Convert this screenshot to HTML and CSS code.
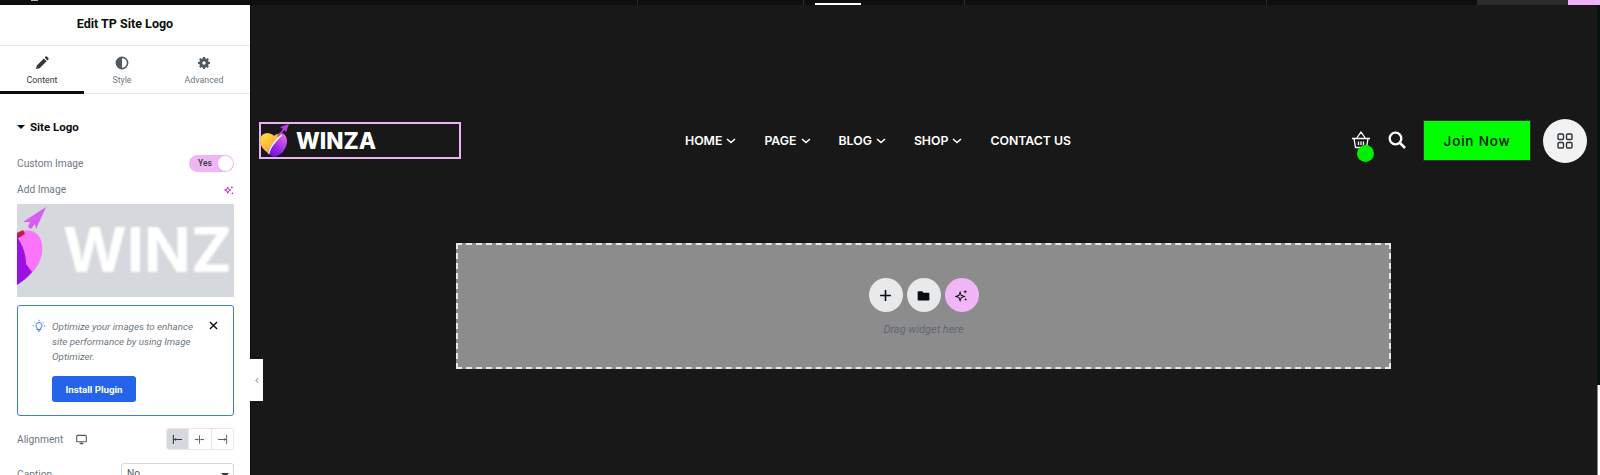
FILE: index.html
```html
<!DOCTYPE html>
<html lang="en">
<head>
  <meta charset="UTF-8" />
  <meta name="viewport" content="width=device-width, initial-scale=1.0"/>
  <title>Edit TP Site Logo</title>
  <link rel="stylesheet" href="styles.css">
</head>
<body>
  <!-- Top strip -->
  <div class="topbar">
    <div class="top-cell cell-a"><span class="top-dot"></span></div>
    <div class="top-cell cell-b"></div>
    <div class="top-cell cell-c"><span class="top-active"></span></div>
    <div class="top-cell cell-d"></div>
    <div class="top-cell cell-e"></div>
    <div class="top-cell cell-f"></div>
    <div class="top-cell cell-g"></div>
  </div>

  <div class="editor">
    <!-- Left panel -->
    <aside class="panel">
      <div class="panel-title">Edit TP Site Logo</div>
      <div class="tabs">
        <div class="tab tab-content active">
          <svg class="tab-icon" viewBox="0 0 14 14"><path d="M1 13l.8-3.6 7-7 2.8 2.8-7 7zM9.600 1.600l1-1a1 1 0 0 1 1.300 0l1.500 1.500a1 1 0 0 1 0 1.300l-1 1z" fill="#333a41"/></svg>
          <span>Content</span>
        </div>
        <div class="tab tab-style">
          <svg class="tab-icon" viewBox="0 0 14 14"><circle cx="7" cy="7" r="5.600" fill="none" stroke="#515962" stroke-width="1.600"/><path d="M7 1.400a5.600 5.600 0 0 0 0 11.200z" fill="#515962"/></svg>
          <span>Style</span>
        </div>
        <div class="tab tab-advanced">
          <svg class="tab-icon" viewBox="0 0 14 14"><circle cx="7" cy="7" r="3.600" fill="none" stroke="#515962" stroke-width="2.400"/><path d="M7 1v12M1 7h12M2.800 2.800l8.400 8.400M11.200 2.800l-8.400 8.400" stroke="#515962" stroke-width="2.200"/><circle cx="7" cy="7" r="1.700" fill="#fff"/></svg>
          <span>Advanced</span>
        </div>
      </div>

      <div class="panel-body">
        <div class="section-head"><span class="caret"></span>Site Logo</div>

        <div class="row row-custom">
          <label>Custom Image</label>
          <div class="toggle"><span>Yes</span><i></i></div>
        </div>

        <div class="row row-add">
          <label>Add Image</label>
          <svg class="spark" viewBox="0 0 12 12"><path d="M4.500 2.500l1 2.700 2.700 1-2.700 1-1 2.700-1-2.700-2.700-1 2.700-1z" fill="none" stroke="#d004d4" stroke-width="1.100"/><path d="M9.500 1l.5 1.300 1.300.5-1.300.5-.5 1.300-.5-1.300-1.300-.5 1.300-.5zM10 8.500l.5 1 1 .5-1 .5-.5 1-.5-1-1-.5 1-.5z" fill="#d004d4"/></svg>
        </div>

        <div class="preview">
          <svg class="preview-mark" viewBox="0 0 30 90">
            <path d="M29 3L6 18l7 0-2 5 3 2 4-5 1 5z" fill="#d75cf2"/>
            <path d="M0 29c6-3 12-3 17-1 7 3 9 12 8 21-2 13-11 23-25 32z" fill="#fb74fb"/>
            <path d="M0 33c6 8 9 18 9 27l6 8c-4 5-9 9-15 13z" fill="#9a12e2"/>
            <path d="M0 29l6-3 2 4-8 5z" fill="#c8194c"/>
          </svg>
          <span class="preview-text">WINZ</span>
        </div>

        <div class="notice">
          <svg class="bulb" viewBox="0 0 14 14"><path d="M7 3.500a3 3 0 0 0-1.800 5.400v1.600h3.600V8.900A3 3 0 0 0 7 3.500zM5.800 12h2.400M7 .8v1.100M2.200 2.800l.8.800M11.800 2.800l-.8.800M.8 7h1.100M12.100 7h1.100" fill="none" stroke="#2563eb" stroke-width=".9"/></svg>
          <div class="notice-body">
            <p>Optimize your images to enhance site performance by using Image Optimizer.</p>
            <button class="install">Install Plugin</button>
          </div>
          <svg class="close" viewBox="0 0 10 10"><path d="M1 1l8 8M9 1l-8 8" stroke="#0c0d0e" stroke-width="1.500"/></svg>
        </div>

        <div class="row row-align">
          <label>Alignment</label>
          <svg class="monitor" viewBox="0 0 12 12"><path d="M1.500 1.500h9a.7.7 0 0 1 .7.7v5.600a.7.7 0 0 1-.7.7h-9a.7.7 0 0 1-.7-.7V2.200a.7.7 0 0 1 .7-.7zM4 10.500h4M6 8.500v2" fill="none" stroke="#515962" stroke-width="1.200"/></svg>
          <div class="seg">
            <div class="seg-btn on"><svg viewBox="0 0 12 12"><path d="M1.500 1v10M1.500 6H11" stroke="#333a41" stroke-width="1.200"/><path d="M2 6l2.500-1.600v3.200z" fill="#333a41"/></svg></div>
            <div class="seg-btn"><svg viewBox="0 0 12 12"><path d="M6 1.500v9M1 6h3M8 6h3" stroke="#515962" stroke-width="1"/><path d="M5.500 6L3.500 4.800v2.400zM6.500 6l2-1.200v2.400z" fill="#515962"/></svg></div>
            <div class="seg-btn"><svg viewBox="0 0 12 12"><path d="M10.500 1v10M1 6h9.500" stroke="#515962" stroke-width="1"/><path d="M10 6L7.500 4.400v3.200z" fill="#515962"/></svg></div>
          </div>
        </div>

        <div class="row row-caption">
          <label>Caption</label>
          <div class="select">No<span class="select-caret"></span></div>
        </div>
      </div>

      <div class="collapse">
        <svg viewBox="0 0 6 10"><path d="M4.500 1.500L1.500 5l3 3.500" fill="none" stroke="#515962" stroke-width="1.300"/></svg>
      </div>
    </aside>

    <!-- Page canvas -->
    <main class="canvas">
      <header class="site-header">
        <div class="logo-box">
          <svg class="logo-mark" viewBox="0 0 30 34">
            <defs>
              <linearGradient id="heartL" x1="0" y1="0" x2="1" y2="1"><stop offset="0" stop-color="#ffe63b"/><stop offset=".6" stop-color="#ffb03a"/><stop offset="1" stop-color="#ef3f5c"/></linearGradient>
              <linearGradient id="heartR" x1="1" y1="0" x2="0" y2="1"><stop offset="0" stop-color="#f870ee"/><stop offset=".55" stop-color="#8f22e6"/><stop offset="1" stop-color="#4a0fb5"/></linearGradient>
            </defs>
            <path d="M14 12C10 8 1 8 0 16c0 7 7 14 14 17 8-2 13-9 13-16 0-6-5-10-9-7z" fill="url(#heartR)"/>
            <path d="M14 12C10 8 1 8 0 16c0 6 4 10 8 13 2-7 7-13 13-18-2-2-5-1-7 1z" fill="url(#heartL)"/>
            <path d="M21.500 10.500C15 15.500 10 22 8 29.500l1.200.8C11 23 16 17 22.500 11.500z" fill="#fff"/>
            <path d="M29 0l-9 3 3 2-6 7 1 1 6.500-7 1.500 2.500z" fill="#b63be0"/>
          </svg>
          <span class="logo-text">WINZA</span>
        </div>

        <nav class="site-nav">
          <a>HOME<svg class="chev" viewBox="0 0 10 6"><path d="M1 1l4 3.500L9 1" fill="none" stroke="#fff" stroke-width="1.600"/></svg></a>
          <a>PAGE<svg class="chev" viewBox="0 0 10 6"><path d="M1 1l4 3.500L9 1" fill="none" stroke="#fff" stroke-width="1.600"/></svg></a>
          <a>BLOG<svg class="chev" viewBox="0 0 10 6"><path d="M1 1l4 3.500L9 1" fill="none" stroke="#fff" stroke-width="1.600"/></svg></a>
          <a>SHOP<svg class="chev" viewBox="0 0 10 6"><path d="M1 1l4 3.500L9 1" fill="none" stroke="#fff" stroke-width="1.600"/></svg></a>
          <a>CONTACT US</a>
        </nav>

        <div class="actions">
          <div class="cart">
            <svg viewBox="0 0 20 18"><path d="M1 7.500h18M3 7.500l1.500 9h11l1.500-9M5.500 7.500L10 1l4.500 6.500M7.500 10.500v3.500M10 10.500v3.500M12.500 10.500v3.500" fill="none" stroke="#fff" stroke-width="1.300"/></svg>
            <span class="cart-dot"></span>
          </div>
          <svg class="search" viewBox="0 0 18 18"><circle cx="7.500" cy="7.500" r="5.800" fill="none" stroke="#fff" stroke-width="2.300"/><path d="M12 12l5 5" stroke="#fff" stroke-width="2.500"/></svg>
          <a class="join">Join Now</a>
          <div class="grid-btn">
            <svg viewBox="0 0 16 16"><g fill="none" stroke="#29343d" stroke-width="1.400"><rect x="1" y="1" width="5.500" height="5.500" rx="1.200"/><rect x="9.500" y="1" width="5.500" height="5.500" rx="1.200"/><rect x="1" y="9.500" width="5.500" height="5.500" rx="1.200"/><rect x="9.500" y="9.500" width="5.500" height="5.500" rx="1.200"/></g></svg>
          </div>
        </div>
      </header>

      <section class="dropzone">
        <div class="drop-buttons">
          <div class="drop-btn">
            <svg viewBox="0 0 12 12"><path d="M6 1v10M1 6h10" stroke="#0c0d0e" stroke-width="1.500"/></svg>
          </div>
          <div class="drop-btn">
            <svg viewBox="0 0 14 12"><path d="M1 1.500h4.500L7 3h5.500a.8.800 0 0 1 .8.800v6.700a.8.800 0 0 1-.8.800h-11a.8.800 0 0 1-.8-.8V2.300a.8.800 0 0 1 .8-.8z" fill="#0c0d0e"/></svg>
          </div>
          <div class="drop-btn ai">
            <svg viewBox="0 0 14 14"><path d="M5.500 3.500l1.200 3.300 3.300 1.200-3.300 1.200-1.200 3.300-1.200-3.300L1 8l3.300-1.200z" fill="none" stroke="#0c0d0e" stroke-width="1.100"/><path d="M11 .8l.6 1.600 1.600.6-1.600.6-.6 1.600-.6-1.600L8.800 3l1.600-.6zM11.500 9.500l.5 1.200 1.200.5-1.200.5-.5 1.200-.5-1.200-1.200-.5 1.200-.5z" fill="#0c0d0e"/></svg>
          </div>
        </div>
        <div class="drop-text">Drag widget here</div>
      </section>
    </main>
  </div>
  <div class="edge-dark"></div>
  <div class="edge-light"></div>
</body>
</html>
```

FILE: styles.css
```css
html, body { margin: 0; padding: 0; height: 475px; overflow: hidden; }
body { font-family: "Roboto", sans-serif; background: #181818; position: relative; }

/* Top strip */
.topbar { display: flex; height: 5px; background: #0c0e11; overflow: hidden; }
.top-cell { position: relative; height: 5px; box-sizing: border-box; border-right: 1px solid #2a2c2f; }
.cell-a { width: 638px; }
.cell-b { width: 166px; }
.cell-c { width: 161px; }
.cell-d { width: 302px; }
.cell-e { width: 210px; border-right: 0; }
.cell-f { width: 91px; background: #2b2b2b; border-right: 0; }
.cell-g { width: 32px; background: #efb1f7; border-right: 0; }
.top-dot { position: absolute; left: 31px; top: 0; width: 7px; height: 1px; background: #b9b9b9; }
.top-active { position: absolute; left: 11px; top: 3px; width: 46px; height: 2px; background: #fff; }

.editor { display: flex; height: 470px; }

/* Panel */
.panel { position: relative; width: 250px; flex: none; background: #fff; color: #515962; border-right: 1px solid #0c0e11; box-sizing: content-box; }
.panel-title { height: 40px; line-height: 38px; text-align: center; font-size: 12.500px; font-weight: 700; color: #0c0d0e; border-bottom: 1px solid #e6e8ea; }
.tabs { display: flex; height: 47px; border-bottom: 1px solid #e6e8ea; }
.tab { box-sizing: border-box; padding-top: 10px; text-align: center; font-size: 8.800px; color: #6d7882; display: flex; flex-direction: column; align-items: center; gap: 5px; position: relative; }
.tab-content { width: 84px; }
.tab-style { width: 76px; }
.tab-advanced { width: 88px; }
.tab.active { color: #333a41; }
.tab.active::after { content: ""; position: absolute; left: 0; right: 0; bottom: -1px; height: 3px; background: #0c0d0e; }
.tab-icon { width: 14px; height: 14px; }

.panel-body { padding: 0 16px 0 17px; overflow: hidden; height: 381px; }
.section-head { margin-top: 25px; height: 16px; line-height: 16px; font-size: 11.500px; font-weight: 700; color: #0c0d0e; display: flex; align-items: center; }
.caret { width: 0; height: 0; border: 4px solid transparent; border-top: 4px solid #0c0d0e; border-bottom: 0; margin-right: 5px; }

.row { display: flex; align-items: center; justify-content: space-between; font-size: 10.200px; color: #6d7882; }
.row label { white-space: nowrap; }
.row-custom { margin-top: 19px; height: 18px; }
.toggle { width: 45px; height: 17px; border-radius: 9px; background: #efb5f5; position: relative; font-size: 8.500px; color: #333a41; line-height: 17px; padding-left: 9px; box-sizing: border-box; font-weight: 500; }
.toggle i { position: absolute; right: 1px; top: 1px; width: 15px; height: 15px; border-radius: 50%; background: #fff; }
.row-add { margin-top: 9px; height: 17px; }
.spark { width: 10px; height: 10px; }

.preview { margin-top: 6px; height: 93px; background: #d5d8dc; display: flex; align-items: flex-start; overflow: hidden; }
.preview-mark { width: 30px; height: 90px; flex: none; filter: blur(.4px); }
.preview-text { margin-left: 16px; margin-top: 15px; font-family: "Inter", sans-serif; font-weight: 700; font-size: 61.500px; color: #fff; filter: blur(1px); line-height: 1; white-space: nowrap; }

.notice { margin-top: 8px; height: 111px; box-sizing: border-box; border: 1px solid #3f78ea; border-radius: 3px; padding: 13px 13px 0 14px; display: flex; align-items: flex-start; }
.bulb { width: 14px; height: 14px; flex: none; margin-right: 6px; }
.notice-body { width: 150px; }
.notice-body p { margin: 0; font-size: 9.800px; font-style: italic; line-height: 15px; color: #6d7882; }
.install { display: block; margin-top: 12px; width: 84px; height: 26px; padding: 0; border: 0; border-radius: 3px; background: #2563eb; color: #fff; font-family: "Roboto", sans-serif; font-size: 9.700px; font-weight: 700; }
.close { width: 9px; height: 9px; margin: 2px 0 0 7px; flex: none; }

.row-align { margin-top: 12px; height: 22px; justify-content: flex-start; }
.monitor { width: 11px; height: 11px; margin-left: 13px; }
.seg { margin-left: auto; display: flex; width: 68px; height: 22px; border: 1px solid #e6e8ea; box-sizing: border-box; border-radius: 3px; overflow: hidden; }
.seg-btn { flex: 1; display: flex; align-items: center; justify-content: center; border-left: 1px solid #e6e8ea; }
.seg-btn:first-child { border-left: 0; }
.seg-btn.on { background: #d5d8dc; }
.seg-btn svg { width: 11px; height: 11px; }

.row-caption { margin-top: 13px; height: 22px; }
.select { width: 113px; height: 22px; box-sizing: border-box; border: 1px solid #d5d8dc; border-radius: 3px; padding-left: 5px; font-size: 10.200px; line-height: 20px; color: #515962; position: relative; }
.select-caret { position: absolute; right: 4px; top: 9px; border: 4px solid transparent; border-top: 4px solid #333a41; border-bottom: 0; }

.collapse { position: absolute; left: 250px; top: 354px; width: 13px; height: 42px; background: #fff; display: flex; align-items: center; justify-content: center; }
.collapse svg { width: 4px; height: 7px; }

/* Canvas */
.canvas { flex: 1; min-width: 0; background: #181818; }
.site-header { display: flex; align-items: center; height: 45px; margin-top: 113px; padding: 0 13px 0 8px; }
.logo-box { width: 202px; height: 37px; box-sizing: border-box; border: 2px solid #e9b5f0; display: flex; align-items: center; flex: none; }
.logo-mark { width: 30px; height: 34px; flex: none; margin-left: -1px; }
.logo-text { margin-left: 6px; font-family: "Inter", sans-serif; font-size: 22.500px; font-weight: 800; color: #fff; }

.site-nav { display: flex; gap: 28px; margin: -1px 0 0 224px; font-family: "Inter", sans-serif; font-size: 12.300px; font-weight: 600; color: #fff; }
.site-nav a { display: flex; align-items: center; gap: 4px; white-space: nowrap; }
.chev { width: 10px; height: 6px; margin-top: 1px; }

.actions { margin-left: auto; display: flex; align-items: center; }
.cart { position: relative; width: 20px; height: 18px; margin-top: -1px; }
.cart svg { display: block; width: 20px; height: 18px; }
.cart-dot { position: absolute; left: 6px; top: 14px; width: 17px; height: 17px; border-radius: 50%; background: #00f000; }
.search { width: 18px; height: 18px; margin-left: 17px; margin-top: -1px; }
.join { margin-left: 17px; width: 108px; height: 41px; box-sizing: border-box; border: 1px solid #333; background: #00ff00; color: #0c0d0e; font-family: "Inter", sans-serif; font-size: 13.500px; font-weight: 500; letter-spacing: .8px; display: flex; align-items: center; justify-content: center; }
.grid-btn { margin-left: 12px; width: 44px; height: 44px; border-radius: 50%; background: #f2f2f2; display: flex; align-items: center; justify-content: center; }
.grid-btn svg { width: 16px; height: 16px; }

.dropzone { margin: 80px 0 0 205px; width: 935px; height: 126px; box-sizing: border-box; background: #8c8c8c; border: 2px dashed #e8e8e8; padding-top: 33px; }
.drop-buttons { display: flex; justify-content: center; gap: 4px; }
.drop-btn { width: 34px; height: 34px; border-radius: 50%; background: #e8e9eb; display: flex; align-items: center; justify-content: center; }
.drop-btn svg { width: 13px; height: 13px; }
.drop-btn.ai { background: #f0b6f8; }
.drop-text { margin-top: 11px; text-align: center; font-size: 11px; font-style: italic; color: #5f6872; }

/* Right window edge */
.edge-dark { position: absolute; right: 0; top: 5px; width: 3px; height: 380px; background: #05140c; }
.edge-light { position: absolute; right: 0; top: 385px; width: 3px; height: 90px; background: #fff; border-left: 1px solid #8a8a8a; box-sizing: border-box; }
```
